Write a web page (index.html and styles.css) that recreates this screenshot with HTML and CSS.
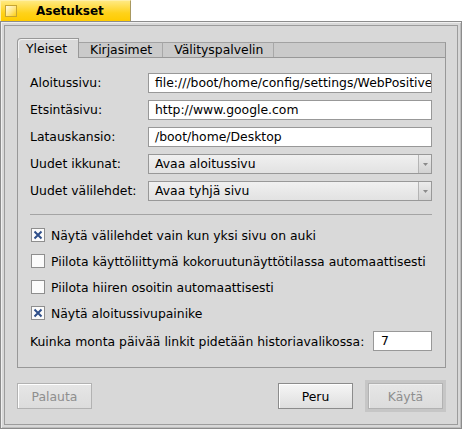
FILE: index.html
```html
<!DOCTYPE html>
<html lang="fi">
<head>
<meta charset="utf-8">
<title>Asetukset</title>
<link rel="stylesheet" href="styles.css">
</head>
<body>
<div class="titletab"><span class="closebox"></span><span class="title">Asetukset</span></div>
<div class="window">
  <div class="frame-inner">
    <div class="content">
      <div class="tabview">
        <div class="tabbar">
          <div class="tab active">Yleiset</div>
          <div class="tab">Kirjasimet</div>
          <div class="tab">Välityspalvelin</div>
          <div class="tabfill"></div>
        </div>
        <div class="panel">
          <div class="form">
            <div class="label">Aloitussivu:</div>
            <div class="textbox">file:///boot/home/config/settings/WebPositive</div>
            <div class="label">Etsintäsivu:</div>
            <div class="textbox">http://www.google.com</div>
            <div class="label">Latauskansio:</div>
            <div class="textbox">/boot/home/Desktop</div>
            <div class="label">Uudet ikkunat:</div>
            <div class="menu"><span class="val">Avaa aloitussivu</span><span class="arrow"><svg width="5" height="3" viewBox="0 0 5 3"><path d="M0 0H5L2.5 3Z" fill="#8a8a8a"/></svg></span></div>
            <div class="label">Uudet välilehdet:</div>
            <div class="menu"><span class="val">Avaa tyhjä sivu</span><span class="arrow"><svg width="5" height="3" viewBox="0 0 5 3"><path d="M0 0H5L2.5 3Z" fill="#8a8a8a"/></svg></span></div>
          </div>
          <div class="sep"></div>
          <div class="checks">
            <div class="check"><svg class="cb" width="14" height="14" viewBox="0 0 14 14"><rect x="0.5" y="0.5" width="13" height="13" fill="#fbfbfb" stroke="#8e8e8e"/><path d="M3.5 3.5L10.5 10.5M10.5 3.5L3.5 10.5" stroke="#2f4f8a" stroke-width="2"/></svg><span>Näytä välilehdet vain kun yksi sivu on auki</span></div>
            <div class="check"><svg class="cb" width="14" height="14" viewBox="0 0 14 14"><rect x="0.5" y="0.5" width="13" height="13" fill="#fbfbfb" stroke="#8e8e8e"/></svg><span>Piilota käyttöliittymä kokoruutunäyttötilassa automaattisesti</span></div>
            <div class="check"><svg class="cb" width="14" height="14" viewBox="0 0 14 14"><rect x="0.5" y="0.5" width="13" height="13" fill="#fbfbfb" stroke="#8e8e8e"/></svg><span>Piilota hiiren osoitin automaattisesti</span></div>
            <div class="check"><svg class="cb" width="14" height="14" viewBox="0 0 14 14"><rect x="0.5" y="0.5" width="13" height="13" fill="#fbfbfb" stroke="#8e8e8e"/><path d="M3.5 3.5L10.5 10.5M10.5 3.5L3.5 10.5" stroke="#2f4f8a" stroke-width="2"/></svg><span>Näytä aloitussivupainike</span></div>
          </div>
          <div class="history">
            <span>Kuinka monta päivää linkit pidetään historiavalikossa:</span>
            <div class="textbox small">7</div>
          </div>
        </div>
      </div>
      <div class="buttons">
        <div class="btn disabled">Palauta</div>
        <div class="spacer"></div>
        <div class="btn">Peru</div>
        <div class="btn disabled default">Käytä</div>
      </div>
    </div>
  </div>
</div>
</body>
</html>
```
FILE: styles.css
```css
html, body {
  margin: 0;
  padding: 0;
  background: #ffffff;
}
body {
  font-family: "DejaVu Sans", sans-serif;
  font-size: 12.4px;
  color: #000;
  width: 462px;
  height: 429px;
  overflow: hidden;
}
.titletab {
  width: 131px;
  height: 21px;
  box-sizing: border-box;
  background: linear-gradient(#ffe980, #ffd21a 60%, #ffcb00);
  border-top: 1px solid #fff0a8;
  border-left: 1px solid #fff0a8;
  border-right: 1px solid #a89860;
  display: flex;
  align-items: center;
}
.closebox {
  width: 12px;
  height: 12px;
  box-sizing: border-box;
  margin-left: 4px;
  border: 1px solid #c6a432;
  background: linear-gradient(135deg, #fffbe6, #ffe580 55%, #ffcf10);
}
.title {
  margin-left: 19px;
  font-weight: bold;
  font-size: 12px;
  line-height: 14px;
}
.window {
  width: 462px;
  height: 408px;
  box-sizing: border-box;
  border: 1px solid #8c8c8c;
  padding: 3px;
  background: #d8d8d8;
  box-shadow: inset 1px 1px 0 #efefef, inset -1px -1px 0 #bdbdbd;
}
.frame-inner {
  height: 100%;
  box-sizing: border-box;
  border: 1px solid #9c9c9c;
  background: #d8d8d8;
}
.content {
  padding: 12px 11px 12px 12px;
  display: flex;
  flex-direction: column;
}
.tabview {
  display: flex;
  flex-direction: column;
}
.tabbar {
  display: flex;
  align-items: flex-end;
  height: 19px;
}
.tab {
  height: 15px;
  box-sizing: border-box;
  padding: 0 10px 0 11px;
  background: #cacaca;
  border-top: 1px solid #a2a2a2;
  border-right: 1px solid #a8a8a8;
  line-height: 14px;
}
.tab.active {
  height: 20px;
  margin-bottom: -1px;
  position: relative;
  z-index: 1;
  padding: 3px 11px 0 8px;
  background: #d9d9d9;
  border: 1px solid #989898;
  border-bottom: none;
  border-radius: 4px 0 0 0;
  box-shadow: inset 1px 1px 0 #f2f2f2;
}
.tabfill {
  flex: 1;
  height: 15px;
  box-sizing: border-box;
  background: #cacaca;
  border-top: 1px solid #a2a2a2;
  border-right: 1px solid #989898;
}
.panel {
  border: 1px solid #989898;
  background: #d9d9d9;
  padding: 15px 13px 16px 12px;
  display: flex;
  flex-direction: column;
}
.form {
  display: grid;
  grid-template-columns: 118px 284px;
  grid-auto-rows: 20px;
  row-gap: 7px;
  align-items: center;
}
.label {
  line-height: 20px;
  white-space: nowrap;
}
.textbox {
  height: 20px;
  box-sizing: border-box;
  border: 1px solid #989898;
  background: #fff;
  padding: 0 6px;
  line-height: 18px;
  white-space: nowrap;
  overflow: hidden;
}
.menu {
  height: 20px;
  box-sizing: border-box;
  border: 1px solid #989898;
  background: linear-gradient(#f0f0f0, #e2e2e2);
  display: flex;
  line-height: 18px;
}
.menu .val {
  flex: 1;
  padding-left: 6px;
  white-space: nowrap;
}
.menu .arrow {
  width: 12px;
  border-left: 1px solid #b4b4b4;
  background: linear-gradient(#ececec, #d2d2d2);
  display: flex;
  align-items: center;
  justify-content: center;
}
.sep {
  height: 1px;
  background: #a4a4a4;
  margin-top: 13px;
}
.checks {
  margin-top: 10px;
  display: flex;
  flex-direction: column;
  gap: 6px;
}
.check {
  height: 20px;
  display: flex;
  align-items: center;
  white-space: nowrap;
}
.cb {
  margin-left: 1px;
  margin-right: 6px;
  flex: none;
}
.history {
  margin-top: 8px;
  height: 20px;
  display: flex;
  align-items: center;
  white-space: nowrap;
}
.textbox.small {
  width: 59px;
  margin-left: auto;
  padding-left: 7px;
}
.buttons {
  margin-top: 13px;
  height: 30px;
  display: flex;
  align-items: center;
}
.spacer {
  flex: 1;
}
.btn {
  width: 75px;
  height: 26px;
  box-sizing: border-box;
  border: 1px solid #8c8c8c;
  background: linear-gradient(#f6f6f6, #dedede);
  box-shadow: inset 1px 1px 0 #ffffff;
  display: flex;
  align-items: center;
  justify-content: center;
  padding-top: 1px;
}
.btn.disabled {
  color: #8e8e8e;
  border-color: #b2b2b2;
  background: linear-gradient(#e6e6e6, #dcdcdc);
}
.btn.default {
  margin-left: 15px;
  margin-right: 3px;
  box-shadow: 0 0 0 3px #c6c6c6, inset 1px 1px 0 #efefef;
}
```
